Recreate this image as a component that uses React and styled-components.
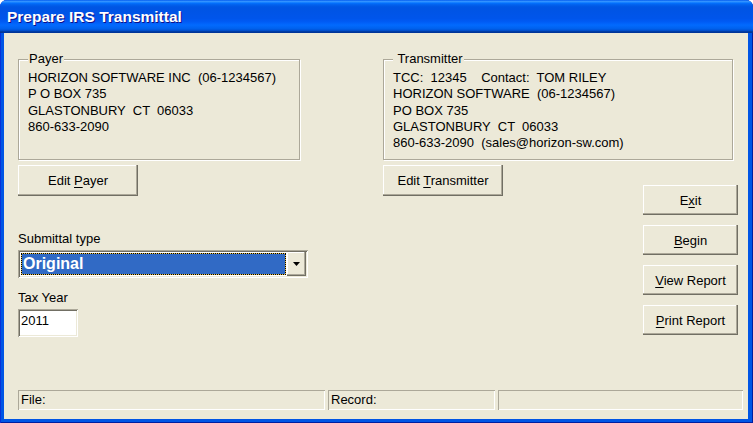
import styled, { createGlobalStyle } from "styled-components";

const Global = createGlobalStyle`
  html, body { margin: 0; padding: 0; background: #fff; }
  body { font-family: "Liberation Sans", Arial, sans-serif; font-size: 13px; color: #000; }
`;

const Window = styled.div`
  width: 753px;
  height: 423px;
  display: flex;
  flex-direction: column;
  background: #0055e5;
  border-radius: 7px 7px 0 0;
  overflow: hidden;
  box-shadow: inset 1px 0 #0831d9, inset -1px 0 #001ea0, inset 0 -1px #001ea0;
`;

const TitleBar = styled.div`
  height: 33px;
  flex: none;
  display: flex;
  align-items: center;
  padding-left: 7px;
  background: linear-gradient(to bottom, #0058ee 0%, #3593ff 4%, #288eff 6%, #127dff 8%, #036ffc 10%, #0262ee 14%, #0057e5 20%, #0054e3 24%, #0055eb 56%, #005bf5 66%, #026afe 76%, #0062ef 86%, #0052d6 92%, #0040ab 94%, #003092 100%);
  color: #fff;
  font-weight: bold;
  font-size: 15.5px;
  text-shadow: 1px 1px #0f1089;
`;

const Frame = styled.div`
  flex: 1;
  display: flex;
  flex-direction: column;
  margin: 0 5px 4px 4px;
  background: #ece9d8;
  padding: 18px 5px 0 14px;
`;

const Layout = styled.div`
  display: grid;
  grid-template-columns: 282px 83px 260px 95px;
  grid-template-rows: auto auto auto;
  align-items: start;
`;

const Group = styled.fieldset`
  margin: 0;
  padding: 3px 9px 0;
  height: 109px;
  box-sizing: border-box;
  min-width: 0;
  border: 1px solid #aca899;
  box-shadow: 1px 1px 0 #fff, inset 1px 1px 0 #fff;
  line-height: 16.3px;
  white-space: pre;
  grid-column: ${(p) => p.$col};
  margin-right: ${(p) => p.$mr || 0}px;
`;

const Legend = styled.legend`
  padding: 0 1px;
  line-height: 16px;
  background: #ece9d8;
`;

const Button = styled.button`
  width: ${(p) => p.$w}px;
  height: ${(p) => p.$h}px;
  padding: 0;
  border: none;
  background: #ece9d8;
  font-family: "Liberation Sans", Arial, sans-serif;
  font-size: 13px;
  color: #000;
  box-shadow: inset -1px -1px #716f64, inset -2px -2px #aca899, inset 1px 1px #fff;
  u { text-decoration-thickness: 1px; text-underline-offset: 2px; }
`;

const EditCell = styled.div`
  grid-column: ${(p) => p.$col};
  grid-row: 2;
  padding-top: 5px;
`;

const Actions = styled.div`
  grid-column: 4;
  grid-row: 2 / 4;
  display: flex;
  flex-direction: column;
  gap: 10px;
  padding-top: 25px;
`;

const Form = styled.div`
  grid-column: 1 / 3;
  grid-row: 3;
  display: flex;
  flex-direction: column;
  align-items: flex-start;
  padding-top: 35px;
`;

const Label = styled.div`
  line-height: 16px;
  margin-bottom: 3px;
  margin-top: ${(p) => p.$mt || 0}px;
`;

const sunken = `
  box-shadow: inset 1px 1px #aca899, inset -1px -1px #fff, inset 2px 2px #716f64, inset -2px -2px #ece9d8;
`;

const Combo = styled.div`
  width: 290px;
  height: 28px;
  box-sizing: border-box;
  padding: 2px;
  display: flex;
  background: #fff;
  ${sunken}
`;

const Selected = styled.div`
  flex: 1;
  margin: 2px;
  background: #316ac5;
  color: #fff;
  font-weight: bold;
  font-size: 16px;
  line-height: 20px;
  padding-left: 1px;
  box-shadow: 0 0 0 1px #e6bf4c;
  outline: 1px dotted #000;
`;

const DropButton = styled.div`
  width: 19px;
  display: flex;
  align-items: center;
  justify-content: center;
  background: #ece9d8;
  box-shadow: inset -1px -1px #716f64, inset -2px -2px #aca899, inset 1px 1px #fff;
`;

const TextBox = styled.div`
  width: 60px;
  height: 28px;
  box-sizing: border-box;
  padding: 4px 0 0 3px;
  line-height: 16px;
  background: #fff;
  ${sunken}
`;

const StatusBar = styled.div`
  margin-top: auto;
  display: flex;
  gap: 3px;
  padding-bottom: 9px;
`;

const Panel = styled.div`
  width: ${(p) => (p.$w ? `${p.$w}px` : "auto")};
  flex: ${(p) => (p.$w ? "none" : 1)};
  height: 20px;
  box-sizing: border-box;
  padding: 2px 0 0 3px;
  line-height: 16px;
  box-shadow: inset 1px 1px #aca899, inset -1px -1px #fff;
`;

export default function App() {
  return (
    <>
      <Global />
      <Window>
        <TitleBar>Prepare IRS Transmittal</TitleBar>
        <Frame>
          <Layout>
            <Group $col="1">
              <Legend>Payer</Legend>
              {"HORIZON SOFTWARE INC  (06-1234567)\nP O BOX 735\nGLASTONBURY  CT  06033\n860-633-2090"}
            </Group>
            <Group $col="3 / 5" $mr={5}>
              <Legend> Transmitter</Legend>
              {"TCC:  12345    Contact:  TOM RILEY\nHORIZON SOFTWARE  (06-1234567)\nPO BOX 735\nGLASTONBURY  CT  06033\n860-633-2090  (sales@horizon-sw.com)"}
            </Group>
            <EditCell $col="1">
              <Button $w={120} $h={31}>Edit <u>P</u>ayer</Button>
            </EditCell>
            <EditCell $col="3">
              <Button $w={120} $h={31}>Edit <u>T</u>ransmitter</Button>
            </EditCell>
            <Form>
              <Label>Submittal type</Label>
              <Combo>
                <Selected>Original</Selected>
                <DropButton>
                  <svg width="7" height="4" viewBox="0 0 7 4">
                    <polygon points="0,0 7,0 3.5,4" fill="#000" />
                  </svg>
                </DropButton>
              </Combo>
              <Label $mt={12}>Tax Year</Label>
              <TextBox>2011</TextBox>
            </Form>
            <Actions>
              <Button $w={95} $h={30}>E<u>x</u>it</Button>
              <Button $w={95} $h={30}><u>B</u>egin</Button>
              <Button $w={95} $h={30}><u>V</u>iew Report</Button>
              <Button $w={95} $h={30}><u>P</u>rint Report</Button>
            </Actions>
          </Layout>
          <StatusBar>
            <Panel $w={307}>File:</Panel>
            <Panel $w={167}>Record:</Panel>
            <Panel />
          </StatusBar>
        </Frame>
      </Window>
    </>
  );
}
